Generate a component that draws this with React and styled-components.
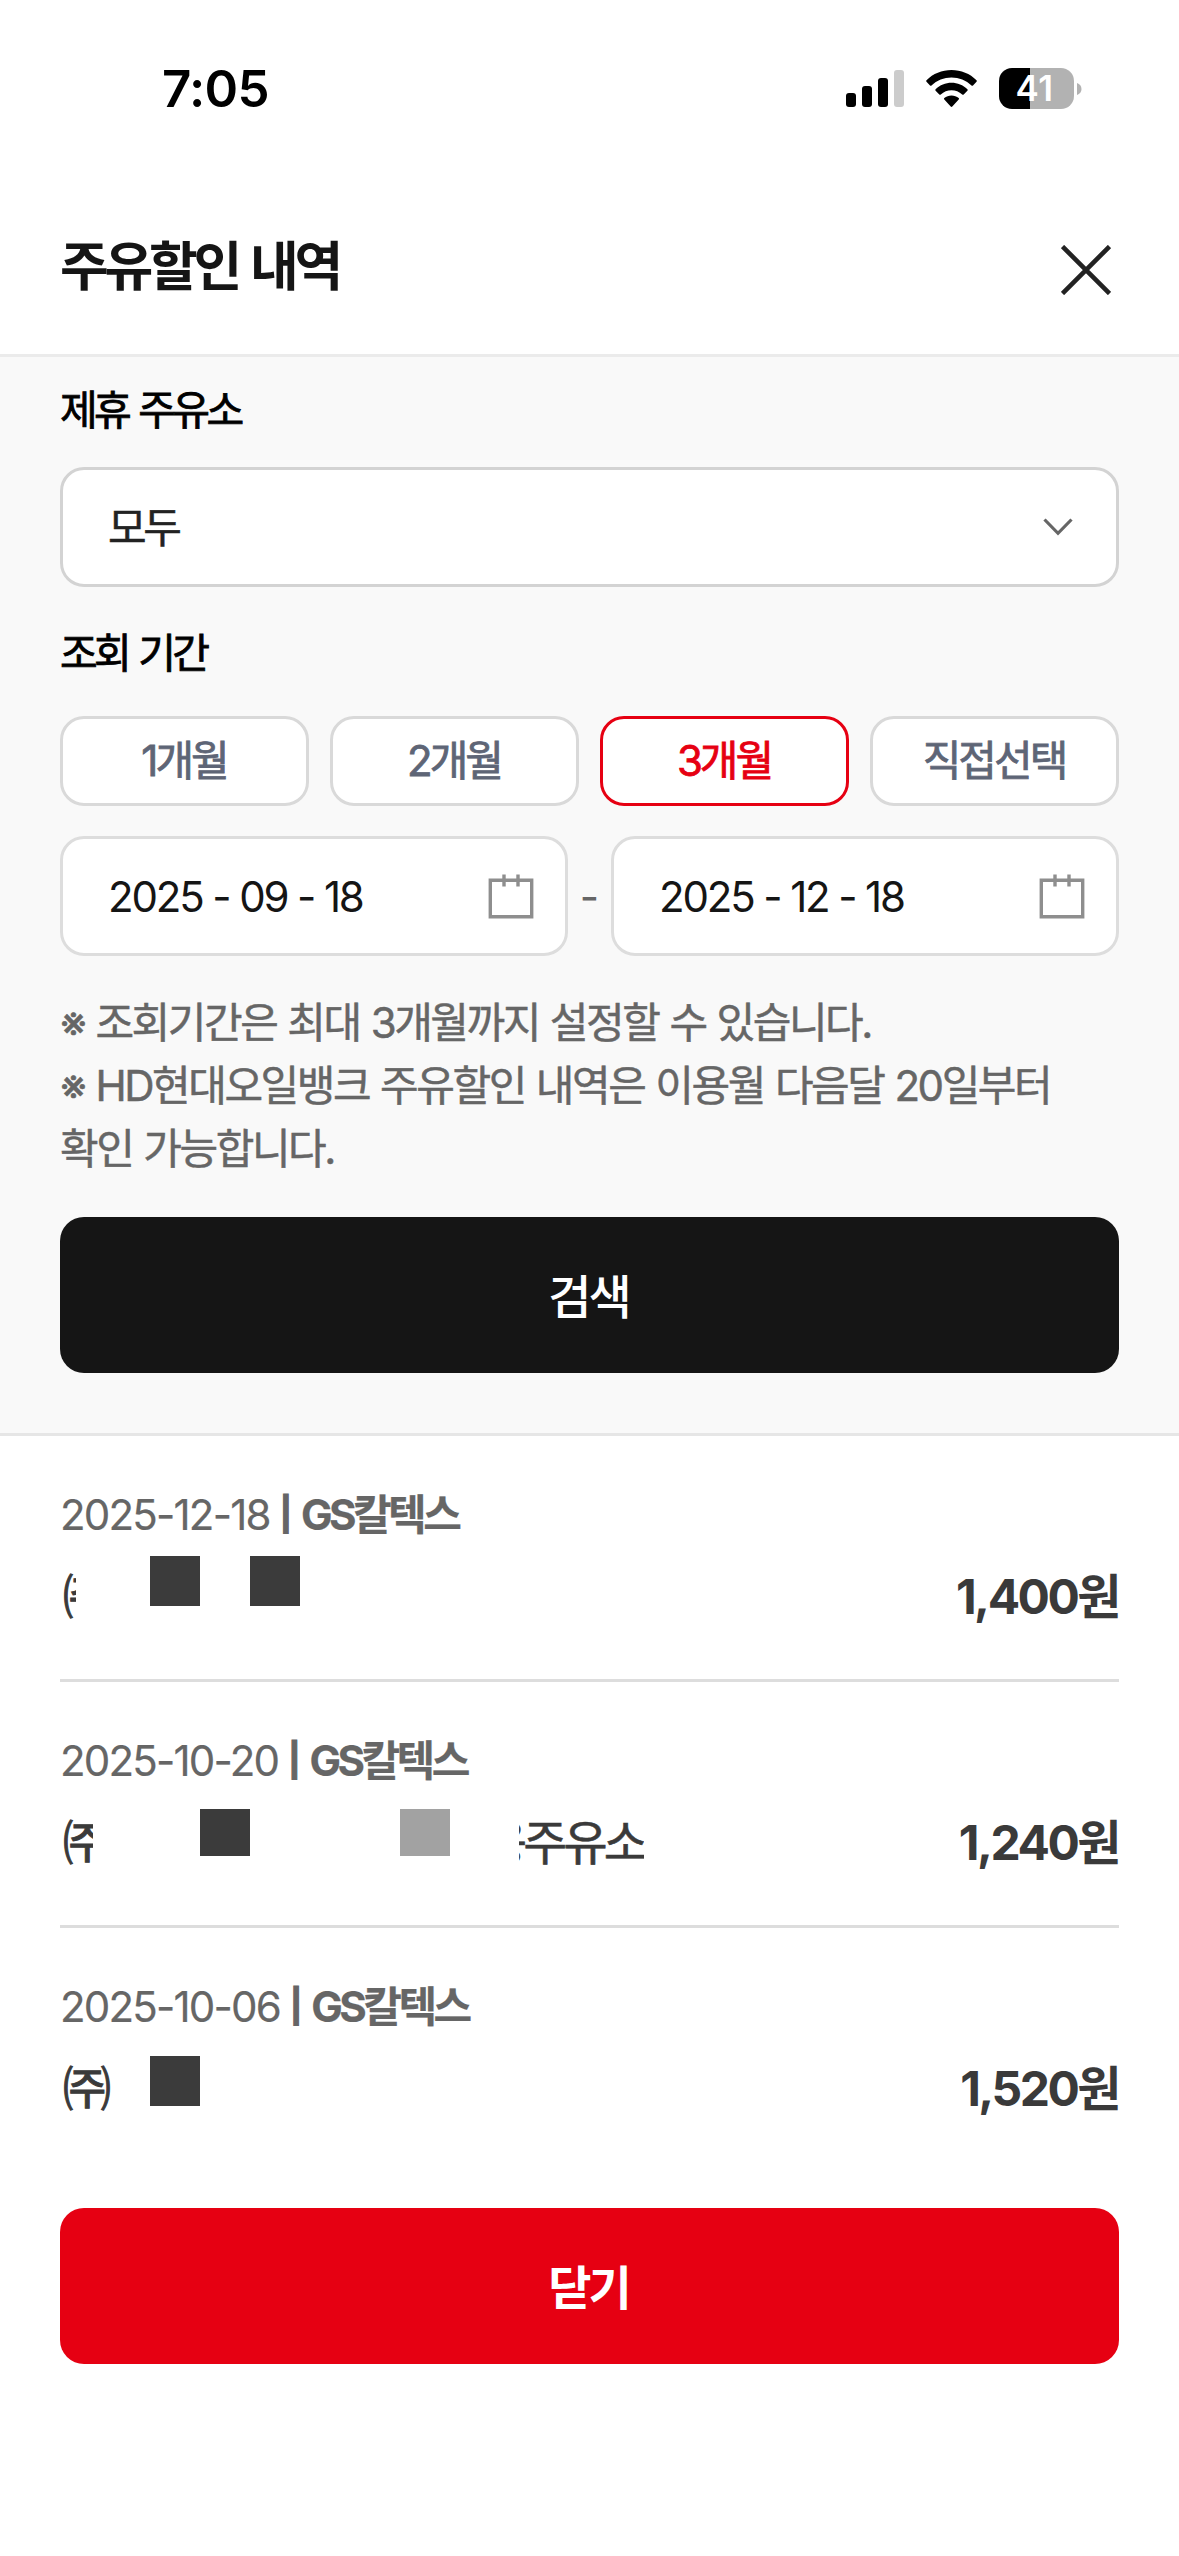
import React, { useState } from "react";
import styled, { createGlobalStyle } from "styled-components";

const periods = ["1개월", "2개월", "3개월", "직접선택"];

const history = [
  {
    date: "2025-12-18",
    brand: "GS칼텍스",
    amount: "1,400원",
    head: 16,
    masks: [{ before: 74 }, { before: 50 }],
  },
  {
    date: "2025-10-20",
    brand: "GS칼텍스",
    amount: "1,240원",
    head: 33,
    masks: [
      { before: 107, top: 7, height: 47 },
      { before: 150, top: 7, height: 47, light: true },
    ],
    tail: "응주유소",
  },
  {
    date: "2025-10-06",
    brand: "GS칼텍스",
    amount: "1,520원",
    head: 52,
    masks: [{ before: 38, top: 8 }],
  },
];

const CalendarIcon = () => (
  <svg width="46" height="46" viewBox="0 0 46 46" fill="none" stroke="#8e8e8e" strokeWidth="3.4">
    <path d="M2.3 7.3h41.4v36.4H2.3zM16 1.5v12M30 1.5v12" />
  </svg>
);

const StatusIcons = () => (
  <Indicators>
    <svg width="58" height="38" viewBox="0 0 58 38">
      <rect x="0" y="23" width="10" height="14" rx="3" />
      <rect x="16" y="16" width="10" height="21" rx="3" />
      <rect x="32" y="8" width="10" height="29" rx="3" />
      <rect x="48" y="0" width="10" height="37" rx="3" fill="#ccc" />
    </svg>
    <svg width="51" height="38" viewBox="0 0 51 38">
      <path d="M25.5 0C35 0 44 3.7 50.5 10.2c.5.5.5 1 0 1.5l-3.5 3.7c-.5.5-1 .5-1.5 0C40.2 10.3 33 7.4 25.5 7.4S10.8 10.3 5.5 15.4c-.5.5-1 .5-1.5 0L.5 11.7c-.5-.5-.5-1 0-1.5C7 3.7 16 0 25.5 0z" />
      <path d="M25.5 12.8c6 0 11.6 2.3 15.9 6.4.5.5.5 1 0 1.5l-3.7 3.7c-.5.5-1 .5-1.5 0-2.9-2.7-6.7-4.2-10.7-4.2s-7.8 1.5-10.7 4.2c-.5.5-1 .5-1.5 0l-3.7-3.7c-.5-.5-.5-1 0-1.5 4.3-4.1 9.9-6.4 15.9-6.4z" />
      <path d="M25.5 25.5c2.7 0 5.2.9 7.2 2.6.5.5.5 1 0 1.5l-6.4 6.9c-.5.5-1.1.5-1.6 0l-6.4-6.9c-.5-.5-.5-1 0-1.5 2-1.7 4.5-2.6 7.2-2.6z" />
    </svg>
    <Battery>
      <BatteryBody>41</BatteryBody>
      <svg width="5" height="12" viewBox="0 0 5 12">
        <path d="M0 0c2.8 1 4.5 3.3 4.5 6S2.8 11 0 12z" fill="#b2b2b2" />
      </svg>
    </Battery>
  </Indicators>
);

const HistoryItem = ({ item }) => (
  <Item>
    <Meta>
      {item.date}
      <Bar>|</Bar>
      <Brand>{item.brand}</Brand>
    </Meta>
    <ItemRow>
      <Head $width={item.head}>㈜</Head>
      {item.masks.map((mask, i) => (
        <Mask
          key={i}
          $before={mask.before}
          $top={mask.top}
          $height={mask.height}
          $light={mask.light}
        />
      ))}
      {item.tail && (
        <Tail>
          <span>{item.tail}</span>
        </Tail>
      )}
      <Amount>{item.amount}</Amount>
    </ItemRow>
  </Item>
);

const App = () => {
  const [period, setPeriod] = useState("3개월");

  return (
    <>
      <GlobalStyle />
      <Screen>
        <StatusBar>
          <Clock>7:05</Clock>
          <StatusIcons />
        </StatusBar>

        <Header>
          <Title>주유할인 내역</Title>
          <CloseIcon width="50" height="50" viewBox="0 0 50 50">
            <path d="M1.5 1.5l47 47M48.5 1.5l-47 47" stroke="#222" strokeWidth="4.6" />
          </CloseIcon>
        </Header>

        <SearchPanel>
          <Label>제휴 주유소</Label>
          <Select>
            모두
            <svg width="30" height="18" viewBox="0 0 30 18" fill="none">
              <path d="M1.5 1.5L15 15.3 28.5 1.5" stroke="#666" strokeWidth="3.2" />
            </svg>
          </Select>

          <Label $second>조회 기간</Label>
          <Periods>
            {periods.map((name) => (
              <PeriodButton
                key={name}
                $active={name === period}
                onClick={() => setPeriod(name)}
              >
                {name}
              </PeriodButton>
            ))}
          </Periods>

          <DateRange>
            <DateField>
              2025 - 09 - 18
              <CalendarIcon />
            </DateField>
            <Dash>-</Dash>
            <DateField>
              2025 - 12 - 18
              <CalendarIcon />
            </DateField>
          </DateRange>

          <Notes>
            <p>※ 조회기간은 최대 3개월까지 설정할 수 있습니다.</p>
            <p>
              ※ HD현대오일뱅크 주유할인 내역은 이용월 다음달 20일부터
              <br />
              확인 가능합니다.
            </p>
          </Notes>

          <WideButton>검색</WideButton>
        </SearchPanel>

        <List>
          {history.map((item) => (
            <HistoryItem key={item.date} item={item} />
          ))}
        </List>

        <Bottom>
          <WideButton $primary>닫기</WideButton>
        </Bottom>
      </Screen>
    </>
  );
};
export default App;

const GlobalStyle = createGlobalStyle`
  * {
    box-sizing: border-box;
  }
  body {
    margin: 0;
    background: #fff;
  }
  body, button {
    font-family: Inter, "Noto Sans CJK KR", sans-serif;
  }
  p {
    margin: 0;
  }
`;

const Screen = styled.div`
  width: 1179px;
  height: 2556px;
  overflow: hidden;
  background: #fff;
  color: #151515;
  font-size: 42px;
  white-space: nowrap;
`;

const StatusBar = styled.div`
  height: 177px;
  padding: 0 97px 0 162px;
  display: flex;
  align-items: center;
  justify-content: space-between;
  color: #000;
`;

const Clock = styled.div`
  font-size: 51px;
  font-weight: 600;
  line-height: 60px;
  letter-spacing: -0.7px;
`;

const Indicators = styled.div`
  display: flex;
  align-items: center;
  gap: 22px;
`;

const Battery = styled.div`
  display: flex;
  align-items: center;
  gap: 3px;
`;

const BatteryBody = styled.div`
  width: 75px;
  height: 41px;
  padding-right: 4px;
  border-radius: 13px;
  background: linear-gradient(to right, #000 31px, #b2b2b2 31px);
  color: #fff;
  font-size: 35px;
  font-weight: 600;
  line-height: 40px;
  letter-spacing: 0.5px;
  text-align: center;
`;

const Header = styled.header`
  height: 180px;
  padding: 0 68px 0 60px;
  border-bottom: 3px solid #ebebeb;
  display: flex;
  align-items: center;
  justify-content: space-between;
`;

const Title = styled.h1`
  margin: 2px 0 0;
  font-size: 53px;
  font-weight: 700;
  line-height: 78px;
  letter-spacing: -4.3px;
  word-spacing: 4px;
`;

const CloseIcon = styled.svg`
  margin-top: 9px;
`;

const SearchPanel = styled.section`
  padding: 22px 60px 60px;
  background: #f9f9f9;
  border-bottom: 3px solid #e6e6e6;
`;

const Label = styled.div`
  margin: ${(props) => (props.$second ? "35px 0 31px" : "0 0 25px")};
  font-size: 41px;
  line-height: 63px;
  letter-spacing: -3.6px;
  word-spacing: 2px;
  color: #000;
  -webkit-text-stroke: 0.8px;
`;

const Select = styled.div`
  height: 120px;
  padding: 0 43px 0 45px;
  border: 3px solid #d3d3d3;
  border-radius: 24px;
  background: #fff;
  display: flex;
  align-items: center;
  justify-content: space-between;
  line-height: 63px;
  letter-spacing: -3.5px;
  color: #222;
  -webkit-text-stroke: 0.5px;
`;

const Periods = styled.div`
  display: grid;
  grid-template-columns: repeat(4, 1fr);
  gap: 21px;
`;

const PeriodButton = styled.button`
  height: 90px;
  padding: 0 1px 0 0;
  border: 3px solid ${(props) => (props.$active ? "#e60012" : "#d9d9d9")};
  border-radius: 24px;
  background: #fff;
  color: ${(props) => (props.$active ? "#e60012" : "#5e6576")};
  font-size: 42px;
  line-height: 84px;
  letter-spacing: -3px;
  -webkit-text-stroke: 0.8px;
`;

const DateRange = styled.div`
  margin-top: 30px;
  display: flex;
  align-items: center;
`;

const DateField = styled.div`
  flex: 1;
  height: 120px;
  padding: 0 31px 0 45px;
  border: 3px solid #ddd;
  border-radius: 24px;
  background: #fff;
  display: flex;
  align-items: center;
  justify-content: space-between;
  line-height: 63px;
  letter-spacing: -2.15px;
`;

const Dash = styled.span`
  width: 43px;
  text-align: center;
  color: #666;
`;

const Notes = styled.div`
  margin: 35px 0 37px;
  color: #666;
  line-height: 63px;
  letter-spacing: -2.45px;
  word-spacing: 1.6px;
  -webkit-text-stroke: 0.5px;
`;

const WideButton = styled.button`
  display: block;
  width: 100%;
  height: 156px;
  padding: 0 2px 0 0;
  border: 0;
  border-radius: 24px;
  background: ${(props) => (props.$primary ? "#e60012" : "#151515")};
  color: #fff;
  font-size: 47px;
  font-weight: ${(props) => (props.$primary ? 700 : 500)};
  line-height: 159px;
  letter-spacing: -3px;
`;

const List = styled.ul`
  margin: 0;
  padding: 0 60px;
  list-style: none;
`;

const Item = styled.li`
  padding: 47px 0 43px;

  &:not(:last-child) {
    border-bottom: 3px solid #ddd;
  }
`;

const Meta = styled.div`
  margin-bottom: 10px;
  display: flex;
  line-height: 63px;
  letter-spacing: -1.8px;
  color: #666;
  -webkit-text-stroke: 0.2px;
`;

const Bar = styled.span`
  margin: 0 9px 0 10px;
  font-size: 33px;
  font-weight: 700;
  letter-spacing: 0;
  -webkit-text-stroke: 1.2px;
`;

const Brand = styled.span`
  font-weight: 700;
  letter-spacing: -3.5px;
`;

const ItemRow = styled.div`
  height: 80px;
  display: flex;
  align-items: flex-start;
  line-height: 81px;
  font-size: 48px;
  color: #3a3a3a;
`;

// Visible part of the station name, cut off where masking begins
const Head = styled.div`
  width: ${(props) => props.$width}px;
  padding-left: 3px;
  overflow: hidden;
  -webkit-text-stroke: 1px;
`;

const Mask = styled.div`
  width: 50px;
  height: ${(props) => props.$height || 50}px;
  margin: ${(props) => props.$top || 0}px 0 0 ${(props) => props.$before}px;
  background: ${(props) => (props.$light ? "#a2a2a2" : "#3b3b3b")};
`;

const Tail = styled.div`
  width: 125px;
  margin-left: 69px;
  overflow: hidden;
  display: flex;
  justify-content: flex-end;
  letter-spacing: -3.9px;
  -webkit-text-stroke: 0.6px;
`;

const Amount = styled.div`
  margin-left: auto;
  font-weight: 700;
  letter-spacing: -2.5px;
`;

const Bottom = styled.footer`
  padding: 37px 60px 0;
`;
